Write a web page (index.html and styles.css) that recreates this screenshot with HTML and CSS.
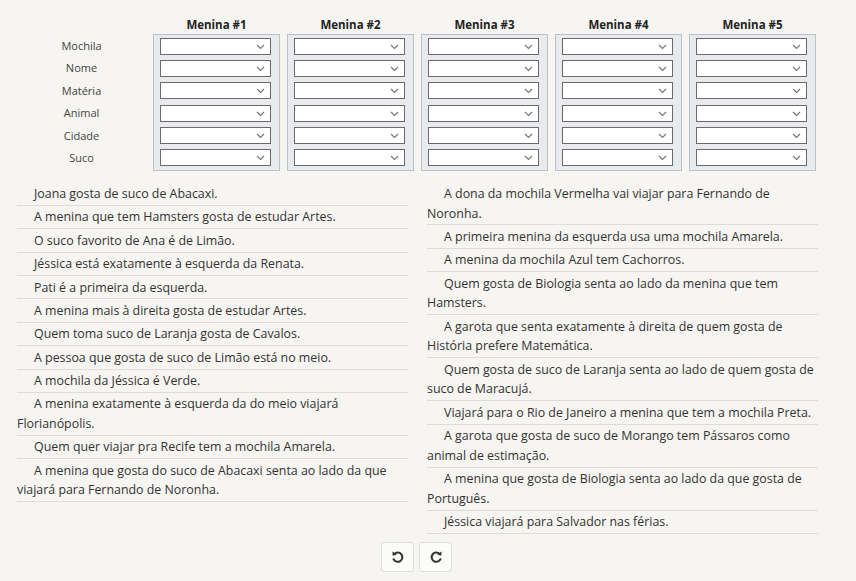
FILE: index.html
```html
<!DOCTYPE html>
<html lang="pt-BR">
<head>
<meta charset="utf-8">
<title>Enigma das Meninas</title>
<link rel="stylesheet" href="styles.css">
</head>
<body>
<div class="page">
  <div class="board">
    <div class="corner"></div>
    <div class="head">Menina #1</div>
    <div class="head">Menina #2</div>
    <div class="head">Menina #3</div>
    <div class="head">Menina #4</div>
    <div class="head">Menina #5</div>

    <div class="labels">
      <div class="label">Mochila</div>
      <div class="label">Nome</div>
      <div class="label">Matéria</div>
      <div class="label">Animal</div>
      <div class="label">Cidade</div>
      <div class="label">Suco</div>
    </div>

    <div class="box" id="box1"></div>
    <div class="box" id="box2"></div>
    <div class="box" id="box3"></div>
    <div class="box" id="box4"></div>
    <div class="box" id="box5"></div>
  </div>

  <div class="clues">
    <ul class="col">
      <li>Joana gosta de suco de Abacaxi.</li>
      <li>A menina que tem Hamsters gosta de estudar Artes.</li>
      <li>O suco favorito de Ana é de Limão.</li>
      <li>Jéssica está exatamente à esquerda da Renata.</li>
      <li>Pati é a primeira da esquerda.</li>
      <li>A menina mais à direita gosta de estudar Artes.</li>
      <li>Quem toma suco de Laranja gosta de Cavalos.</li>
      <li>A pessoa que gosta de suco de Limão está no meio.</li>
      <li>A mochila da Jéssica é Verde.</li>
      <li>A menina exatamente à esquerda da do meio viajará Florianópolis.</li>
      <li>Quem quer viajar pra Recife tem a mochila Amarela.</li>
      <li>A menina que gosta do suco de Abacaxi senta ao lado da que viajará para Fernando de Noronha.</li>
    </ul>
    <ul class="col">
      <li>A dona da mochila Vermelha vai viajar para Fernando de Noronha.</li>
      <li>A primeira menina da esquerda usa uma mochila Amarela.</li>
      <li>A menina da mochila Azul tem Cachorros.</li>
      <li>Quem gosta de Biologia senta ao lado da menina que tem Hamsters.</li>
      <li>A garota que senta exatamente à direita de quem gosta de História prefere Matemática.</li>
      <li>Quem gosta de suco de Laranja senta ao lado de quem gosta de suco de Maracujá.</li>
      <li>Viajará para o Rio de Janeiro a menina que tem a mochila Preta.</li>
      <li>A garota que gosta de suco de Morango tem Pássaros como animal de estimação.</li>
      <li>A menina que gosta de Biologia senta ao lado da que gosta de Português.</li>
      <li>Jéssica viajará para Salvador nas férias.</li>
    </ul>
  </div>

  <div class="actions">
    <button class="btn" type="button" aria-label="Desfazer">
      <svg width="14" height="14" viewBox="0 0 14 14"><path d="M3.4 4 A4.6 4.6 0 1 1 2.6 9.2" fill="none" stroke="#333" stroke-width="2" stroke-linecap="round"/><path d="M1.4 1.4 L1.7 5.8 L5.9 4.4 Z" fill="#333"/></svg>
    </button>
    <button class="btn" type="button" aria-label="Refazer">
      <svg width="14" height="14" viewBox="0 0 14 14"><path d="M10.6 4 A4.6 4.6 0 1 0 11.4 9.2" fill="none" stroke="#333" stroke-width="2" stroke-linecap="round"/><path d="M12.6 1.4 L12.3 5.8 L8.1 4.4 Z" fill="#333"/></svg>
    </button>
  </div>
</div>
<script>
  for (var i = 1; i <= 5; i++) {
    var box = document.getElementById('box' + i);
    for (var r = 0; r < 6; r++) {
      var w = document.createElement('div');
      w.className = 'sel';
      w.innerHTML = '<select></select><svg class="chev" width="9" height="6" viewBox="0 0 9 6"><path d="M1 1 L4.5 4.5 L8 1" fill="none" stroke="#777" stroke-width="1.2"/></svg>';
      box.appendChild(w);
    }
  }
</script>
</body>
</html>
```

FILE: styles.css
```css
html, body {
  margin: 0;
  padding: 0;
  background: #f6f5f1;
}

body {
  font-family: "Open Sans", "Noto Sans", sans-serif;
  color: #333;
}

.page {
  width: 801px;
  margin-left: 17px;
}

.board {
  display: grid;
  grid-template-columns: 129px repeat(5, 127px);
  column-gap: 7px;
  padding-top: 17px;
}

.head {
  font-size: 11.5px;
  font-weight: bold;
  color: #222;
  text-align: center;
  line-height: 15px;
  height: 16.5px;
}

.labels {
  display: flex;
  flex-direction: column;
  gap: 5.4px;
  padding-top: 3.5px;
}

.label {
  height: 17px;
  line-height: 17px;
  font-size: 11px;
  color: #444;
  text-align: center;
}

.box {
  display: flex;
  flex-direction: column;
  gap: 5.4px;
  padding: 3px 8px 4px 6px;
  background: #e8eaed;
  border: 1px solid #b9c0c7;
}

.sel {
  position: relative;
  height: 17px;
}

.sel select {
  display: block;
  width: 100%;
  height: 17px;
  margin: 0;
  padding: 0;
  border: 1px solid #6b6b6b;
  border-radius: 0;
  background: #fff;
  -webkit-appearance: none;
  appearance: none;
}

.chev {
  position: absolute;
  right: 6px;
  top: 6px;
}

.clues {
  display: grid;
  grid-template-columns: 391px 391px;
  column-gap: 19px;
  align-items: start;
  margin-top: 11px;
}

.col {
  list-style: none;
  margin: 0;
  padding: 0;
}

.col li {
  font-size: 12.4px;
  line-height: 19.6px;
  padding: 1.5px 0 1.3px;
  text-indent: 17px;
  border-bottom: 1px solid #dcdcd8;
}

.actions {
  display: flex;
  justify-content: center;
  gap: 5px;
  margin-top: 8px;
  padding-right: 2px;
}

.btn {
  width: 33px;
  height: 30px;
  padding: 0;
  display: flex;
  align-items: center;
  justify-content: center;
  background: #fbfbfa;
  border: 1px solid #dedede;
  border-radius: 3px;
}
```
